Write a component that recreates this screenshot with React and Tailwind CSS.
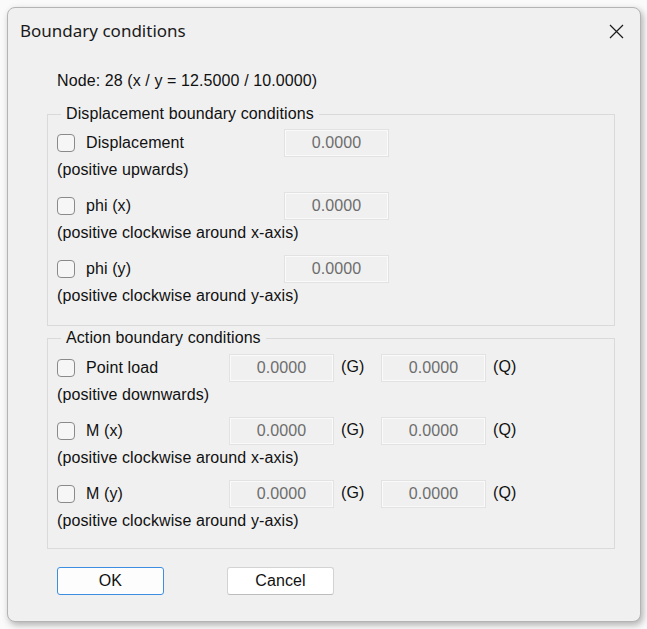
import React from "react";

const body = { fontFamily: '"Liberation Sans", Arial, sans-serif', letterSpacing: "0.1px" };

function Check() {
  return (
    <span className="block h-[18px] w-[18px] shrink-0 rounded-[4px] border border-[#8a8a8a] bg-[#f6f6f6]" />
  );
}

function Field() {
  return (
    <div className="flex h-[28px] w-[105px] shrink-0 items-center justify-center border border-[#e2e2e2] bg-[#f0f0f0] text-[16px] text-[#6d6d6d] shadow-[inset_0_0_0_1px_#fafafa]">
      0.0000
    </div>
  );
}

function DispRow({ label, note, last }) {
  return (
    <div className={last ? "" : "mb-[13px]"}>
      <div className="flex h-[28px] items-center">
        <div className="flex w-[227px] items-center gap-[11px]">
          <Check />
          <span>{label}</span>
        </div>
        <Field />
      </div>
      <div className="mt-[4px] h-[18px] leading-[18px]">{note}</div>
    </div>
  );
}

function ActionRow({ label, note, last }) {
  return (
    <div className={last ? "" : "mb-[13px]"}>
      <div className="flex h-[28px] items-center">
        <div className="flex w-[172px] items-center gap-[11px]">
          <Check />
          <span>{label}</span>
        </div>
        <Field />
        <span className="w-[47px] pl-[7px] -mt-[3px]">(G)</span>
        <Field />
        <span className="pl-[7px] -mt-[3px]">(Q)</span>
      </div>
      <div className="mt-[4px] h-[18px] leading-[18px]">{note}</div>
    </div>
  );
}

function Group({ title, children, className }) {
  return (
    <fieldset className={"ml-[39px] w-[568px] border border-[#dadada] pl-[9px] pt-[6px] " + className}>
      <legend className="ml-[4px] px-[5px] h-[18px] leading-[18px]">{title}</legend>
      {children}
    </fieldset>
  );
}

export default function App() {
  return (
    <div className="h-[629px] w-[647px] overflow-hidden bg-[#fafafa] pl-[7px] pt-[7px]">
      <div className="h-[615px] w-[634px] rounded-[8px] border border-[#b4b4b4] bg-[#f0f0f0] text-[#111] shadow-[2px_3px_7px_rgba(0,0,0,0.3)]">
        <div className="flex h-[46px] items-center justify-between pl-[12px] pr-[16px]">
          <span
            className="text-[17px] text-[#1a1a1a]"
            style={{ fontFamily: '"Noto Sans", "Open Sans", sans-serif' }}
          >
            Boundary conditions
          </span>
          <svg width="15" height="15" viewBox="0 0 15 15" className="mt-[1px]">
            <path d="M1 1 L14 14 M14 1 L1 14" stroke="#1a1a1a" strokeWidth="1.2" fill="none" />
          </svg>
        </div>

        <div className="text-[16px]" style={body}>
          <div className="ml-[49px] mt-[18px] h-[18px] leading-[18px]">
            Node: 28 (x / y = 12.5000 / 10.0000)
          </div>

          <Group title="Displacement boundary conditions" className="mt-[15px] pb-[20px]">
            <DispRow label="Displacement" note="(positive upwards)" />
            <DispRow label="phi (x)" note="(positive clockwise around x-axis)" />
            <DispRow label="phi (y)" note="(positive clockwise around y-axis)" last />
          </Group>

          <Group title="Action boundary conditions" className="mt-[3px] pb-[18px]">
            <div className="pt-[1px]" />
            <ActionRow label="Point load" note="(positive downwards)" />
            <ActionRow label="M (x)" note="(positive clockwise around x-axis)" />
            <ActionRow label="M (y)" note="(positive clockwise around y-axis)" last />
          </Group>

          <div className="ml-[49px] mt-[18px] flex gap-[63px]">
            <button className="h-[28px] w-[107px] rounded-[3px] border border-[#3d8ee0] bg-[#fdfdfd] text-[16px]">
              OK
            </button>
            <button className="h-[28px] w-[107px] rounded-[3px] border border-[#d3d3d3] border-b-[#bdbdbd] bg-white text-[16px]">
              Cancel
            </button>
          </div>
        </div>
      </div>
    </div>
  );
}
